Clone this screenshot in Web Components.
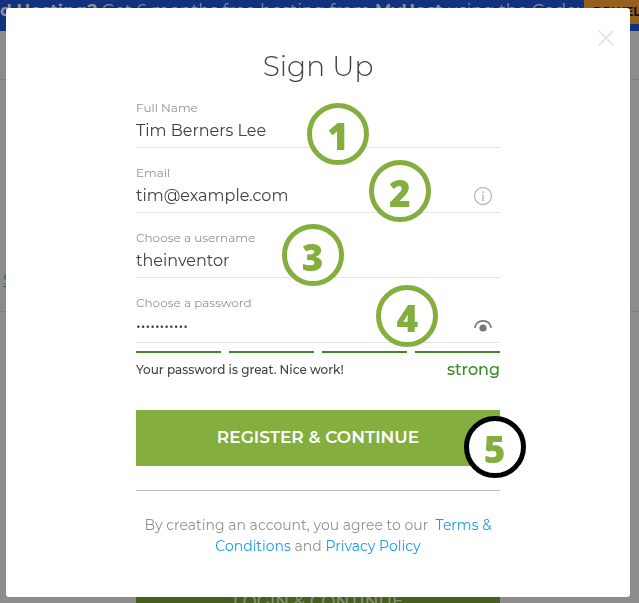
<!DOCTYPE html>
<html lang="en">
<head>
<meta charset="UTF-8">
<meta name="viewport" content="width=device-width, initial-scale=1.0">
<title>Sign Up</title>
<style>
  body {
    margin: 0;
    height: 100vh;
    overflow: hidden;
    background: #8c8c8c;
    color: #3f4042;
    font-family: Montserrat, Inter, "Open Sans", sans-serif;
    --green: #84ae3e;
    --strong: #3f8a26;
    --blue: #1b9be8;
    --muted: #929292;
  }
</style>
</head>
<body>
  <backdrop-page></backdrop-page>

  <signup-modal heading="Sign Up">
    <form-field label="Full Name" type="text" value="Tim Berners Lee">
      <step-badge slot="badge" style="--x: 47%; --y: 20px">1</step-badge>
    </form-field>
    <form-field label="Email" type="email" value="tim@example.com">
      <svg slot="icon" width="20" height="20" viewBox="0 0 20 20" fill="none" stroke="#b9bec4">
        <circle cx="10" cy="10" r="8.500" stroke-width="1.400"/>
        <path d="M10 8.500V15" stroke-width="1.600"/>
        <path d="M10 5.200V7" stroke-width="1.600"/>
      </svg>
      <step-badge slot="badge" style="--x: 64%; --y: 12px">2</step-badge>
    </form-field>
    <form-field label="Choose a username" type="text" value="theinventor">
      <step-badge slot="badge" style="--x: 40%; --y: 11px">3</step-badge>
    </form-field>
    <form-field label="Choose a password" type="password" value="theinventor">
      <svg slot="icon" width="20" height="20" viewBox="0 0 20 20">
        <path d="M1.800 11.800C2.600 7.600 5.800 4.800 10 4.800s7.400 2.800 8.200 7" fill="none" stroke="#77777a" stroke-width="1.700"/>
        <circle cx="10" cy="12" r="3.600" fill="#77777a"/>
      </svg>
      <step-badge slot="badge" style="--x: 66%; --y: 7px">4</step-badge>
    </form-field>
    <password-strength level="strong">Your password is great. Nice work!</password-strength>
    <submit-button>
      REGISTER &amp; CONTINUE
      <step-badge slot="badge" style="--x: 90%; --y: 6px; --ring: #000">5</step-badge>
    </submit-button>
    <terms-note slot="footer"></terms-note>
  </signup-modal>

<script>
class BackdropPage extends HTMLElement {
  connectedCallback() {
    this.attachShadow({ mode: 'open' });
    this.shadowRoot.innerHTML = `
      <style>
        :host {
          display: block;
          height: 100%;
          overflow: hidden;
        }
        .banner {
          display: flex;
          align-items: flex-start;
          gap: 4px;
          height: 31px;
          background: #12317f;
          color: #8c8f98;
          font-size: 17px;
          line-height: 20px;
          white-space: nowrap;
          overflow: hidden;
        }
        .banner b {
          font-weight: 700;
        }
        .code {
          flex: 1;
          padding-left: 9px;
          background: #955f1c;
          color: #111;
          font-size: 12px;
          font-weight: 700;
          line-height: 24px;
        }
        header {
          height: 48px;
          border-bottom: 1px solid #7c7c7c;
        }
        .login {
          box-sizing: border-box;
          height: 232px;
          padding: 190px 3px 0;
          border-bottom: 1px solid #7c7c7c;
        }
        .login a {
          color: #11657f;
          font-size: 14px;
        }
        main {
          width: 364px;
          margin: 259px auto 0;
          padding-right: 3px;
        }
        button {
          width: 100%;
          height: 60px;
          border: 0;
          background: #465f1e;
          color: #85907a;
          font: inherit;
          font-size: 17px;
          font-weight: 500;
        }
      </style>
      <div class="banner">
        <span><b>d Hosting?</b> Get 6 months free hosting from <b>MyHost</b> using the Code:</span>
        <span class="code">DRWEL</span>
      </div>
      <header></header>
      <div class="login"><a href="#">S</a></div>
      <main><button type="button">LOGIN &amp; CONTINUE</button></main>
    `;
  }
}

class SignupModal extends HTMLElement {
  connectedCallback() {
    this.attachShadow({ mode: 'open' });
    this.shadowRoot.innerHTML = `
      <style>
        :host {
          display: block;
          position: fixed;
          inset: 8px 9px 6px 6px;
          overflow: auto;
          border-radius: 3px;
          background: #fff;
        }
        .close {
          position: absolute;
          top: 20px;
          right: 14px;
          padding: 0;
          border: 0;
          background: none;
          line-height: 0;
          cursor: pointer;
        }
        .content {
          max-width: 364px;
          margin: 0 auto;
          padding: 41px 16px 0;
        }
        h1 {
          margin: 0;
          font-size: 28px;
          font-weight: 300;
          line-height: 34px;
          text-align: center;
        }
        form {
          display: flex;
          flex-direction: column;
        }
        hr {
          width: 100%;
          margin: 24px 0;
          border: 0;
          border-top: 1px solid #bcbcbc;
        }
      </style>
      <button class="close" type="button" aria-label="Close">
        <svg width="20" height="20" viewBox="0 0 20 20" stroke="#e6e6e6" stroke-width="1.800">
          <path d="M2.500 2.500L17.500 17.500M17.500 2.500L2.500 17.500"/>
        </svg>
      </button>
      <div class="content">
        <h1>${this.getAttribute('heading')}</h1>
        <form><slot></slot></form>
        <hr>
        <slot name="footer"></slot>
      </div>
    `;
  }
}

class FormField extends HTMLElement {
  connectedCallback() {
    this.attachShadow({ mode: 'open' });
    this.shadowRoot.innerHTML = `
      <style>
        :host {
          display: block;
          position: relative;
          padding: 16px 0 2px;
          border-bottom: 1px solid #e4e4e4;
        }
        label {
          display: block;
          color: var(--muted);
          font-size: 12px;
          line-height: 18px;
        }
        .row {
          display: flex;
          align-items: center;
          height: 28px;
          padding-right: 7px;
        }
        input {
          flex: 1;
          min-width: 0;
          padding: 0;
          border: 0;
          outline: 0;
          background: none;
          color: inherit;
          font: inherit;
          font-size: 16px;
          line-height: 24px;
        }
      </style>
      <label for="field">${this.getAttribute('label')}</label>
      <div class="row">
        <input id="field" type="${this.getAttribute('type')}" value="${this.getAttribute('value')}">
        <slot name="icon"></slot>
      </div>
      <slot name="badge"></slot>
    `;
  }
}

class StepBadge extends HTMLElement {
  connectedCallback() {
    this.attachShadow({ mode: 'open' });
    this.shadowRoot.innerHTML = `
      <style>
        :host {
          display: flex;
          align-items: center;
          justify-content: center;
          position: absolute;
          left: var(--x);
          top: var(--y);
          z-index: 1;
          box-sizing: border-box;
          width: 62px;
          height: 62px;
          padding-top: 2px;
          border: 5px solid var(--ring, var(--green));
          border-radius: 50%;
          background: #fff;
          color: var(--green);
          font-family: "Open Sans", sans-serif;
          font-size: 37px;
          font-weight: 800;
          line-height: 1;
        }
      </style>
      <slot></slot>
    `;
  }
}

class PasswordStrength extends HTMLElement {
  connectedCallback() {
    this.attachShadow({ mode: 'open' });
    this.shadowRoot.innerHTML = `
      <style>
        :host {
          display: block;
          margin-top: 8px;
        }
        .bars {
          display: grid;
          grid-template-columns: repeat(4, 1fr);
          gap: 8px;
        }
        .bars i {
          height: 2px;
          background: var(--strong);
        }
        .text {
          display: flex;
          justify-content: space-between;
          align-items: center;
          height: 32px;
          font-size: 12px;
          font-weight: 500;
        }
        .level {
          color: var(--strong);
          font-size: 16px;
        }
      </style>
      <div class="bars"><i></i><i></i><i></i><i></i></div>
      <div class="text">
        <span><slot></slot></span>
        <span class="level">${this.getAttribute('level')}</span>
      </div>
    `;
  }
}

class SubmitButton extends HTMLElement {
  connectedCallback() {
    this.attachShadow({ mode: 'open' });
    this.shadowRoot.innerHTML = `
      <style>
        :host {
          display: block;
          position: relative;
          margin-top: 25px;
        }
        button {
          display: block;
          width: 100%;
          height: 56px;
          padding: 0 0 2px;
          border: 0;
          background: var(--green);
          color: #fff;
          font: inherit;
          font-size: 17px;
          font-weight: 600;
          cursor: pointer;
        }
      </style>
      <button type="submit"><slot></slot></button>
      <slot name="badge"></slot>
    `;
  }
}

class TermsNote extends HTMLElement {
  connectedCallback() {
    this.attachShadow({ mode: 'open' });
    this.shadowRoot.innerHTML = `
      <style>
        :host {
          display: block;
          color: var(--muted);
          font-size: 14px;
          line-height: 21px;
          text-align: center;
        }
        a {
          color: var(--blue);
          text-decoration: none;
        }
      </style>
      By creating an account, you agree to our&nbsp; <a href="#">Terms &amp; Conditions</a> and <a href="#">Privacy Policy</a>
    `;
  }
}

customElements.define('backdrop-page', BackdropPage);
customElements.define('signup-modal', SignupModal);
customElements.define('form-field', FormField);
customElements.define('step-badge', StepBadge);
customElements.define('password-strength', PasswordStrength);
customElements.define('submit-button', SubmitButton);
customElements.define('terms-note', TermsNote);
</script>
</body>
</html>
